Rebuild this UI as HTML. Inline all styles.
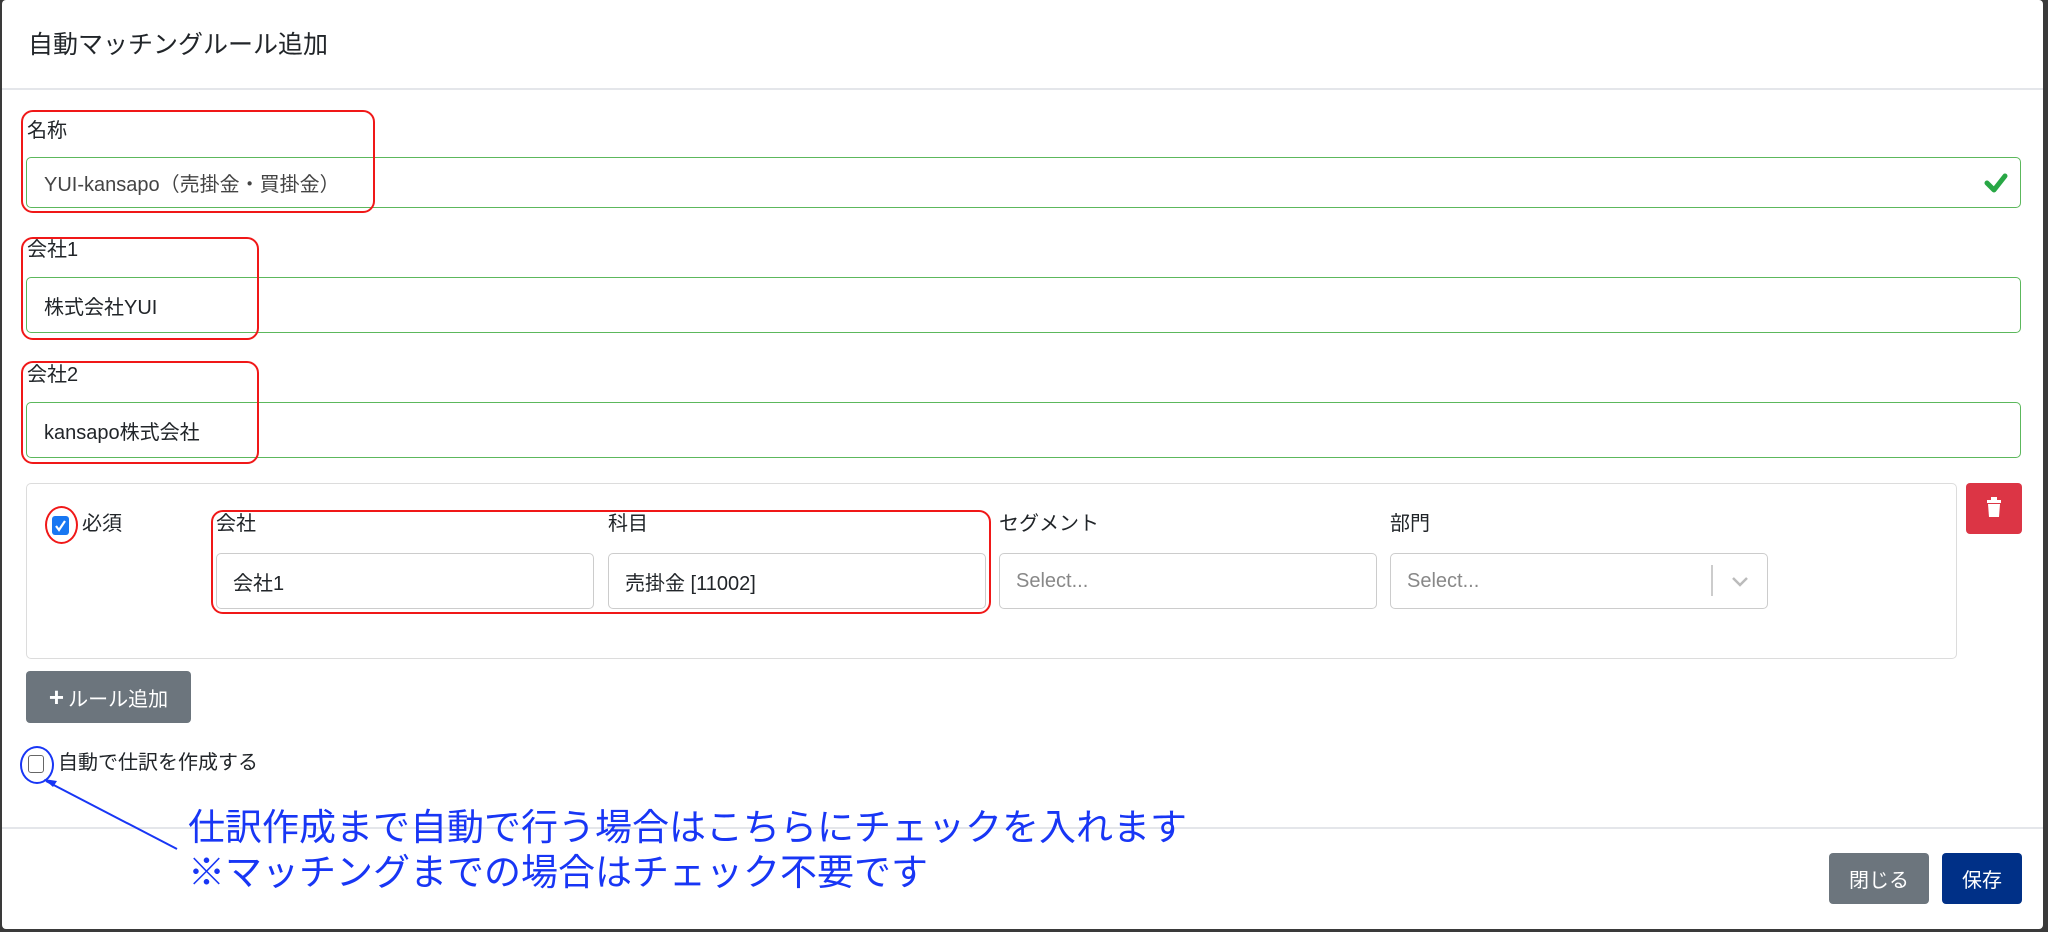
<!DOCTYPE html>
<html><head><meta charset="utf-8"><style>
*{box-sizing:border-box;margin:0;padding:0}
body{width:2048px;height:932px;overflow:hidden;background:#3a3a3a;font-family:"Liberation Sans","Noto Sans CJK JP",sans-serif;color:#212529;position:relative}
.modal{position:absolute;left:2px;top:0;width:2041px;height:929px;background:#fff;border-radius:4px}
.a{position:absolute}
.lbl{font-size:20px;line-height:24px}
.inp{position:absolute;border:1.5px solid #5cb85c;border-radius:5px;font-size:20px;padding-left:17px;display:flex;align-items:center}
.sel{position:absolute;border:1.5px solid #ccc;border-radius:5px;font-size:20px;padding-left:16px;display:flex;align-items:center;top:553px;height:56px;width:378px}
.red{position:absolute;border:2px solid #f01818;border-radius:12px}
.blue{color:#1836f5;font-size:37px;line-height:44px;white-space:nowrap}
</style></head><body>
<div class="modal"></div>
<div class="a" style="left:28px;top:30px;font-size:25px;line-height:30px">自動マッチングルール追加</div>
<div class="a" style="left:2px;top:88px;width:2041px;height:2px;background:#e4e6ea"></div>

<div class="a lbl" style="left:27px;top:119px">名称</div>
<div class="inp" style="left:26px;top:157px;width:1995px;height:51px;color:#444">YUI-kansapo（売掛金・買掛金）</div>
<svg class="a" style="left:1984px;top:172px" width="24" height="22" viewBox="0 0 24 22"><path d="M3 11l7 7L21 4" stroke="#28a745" stroke-width="5" fill="none" stroke-linecap="round" stroke-linejoin="round"/></svg>
<div class="red" style="left:21px;top:110px;width:354px;height:103px"></div>

<div class="a lbl" style="left:27px;top:238px">会社1</div>
<div class="inp" style="left:26px;top:277px;width:1995px;height:56px">株式会社YUI</div>
<div class="red" style="left:21px;top:237px;width:238px;height:103px"></div>

<div class="a lbl" style="left:27px;top:363px">会社2</div>
<div class="inp" style="left:26px;top:402px;width:1995px;height:56px">kansapo株式会社</div>
<div class="red" style="left:21px;top:361px;width:238px;height:103px"></div>

<div class="a" style="left:26px;top:483px;width:1931px;height:176px;border:1.5px solid #dcdcdc;border-radius:5px"></div>
<div class="a" style="left:52px;top:516px;width:17px;height:19px;background:#1877f2;border-radius:3px"></div>
<svg class="a" style="left:53px;top:518px" width="15" height="15"><path d="M3 8l3 4 6-9" stroke="#fff" stroke-width="2.2" fill="none"/></svg>
<div class="red" style="left:45px;top:506px;width:33px;height:38px;border-radius:50%"></div>
<div class="a lbl" style="left:82px;top:512px">必須</div>
<div class="a lbl" style="left:216px;top:512px">会社</div>
<div class="a lbl" style="left:608px;top:512px">科目</div>
<div class="a lbl" style="left:999px;top:512px">セグメント</div>
<div class="a lbl" style="left:1390px;top:512px">部門</div>
<div class="sel" style="left:216px">会社1</div>
<div class="sel" style="left:608px">売掛金 [11002]</div>
<div class="sel" style="left:999px;color:#888">Select...</div>
<div class="sel" style="left:1390px;color:#888">Select...</div>
<div class="a" style="left:1711px;top:565px;width:1.5px;height:31px;background:#ccc"></div>
<svg class="a" style="left:1730px;top:576px" width="20" height="12"><path d="M3 2l7 7 7-7" stroke="#bbb" stroke-width="2.5" fill="none"/></svg>
<div class="red" style="left:211px;top:510px;width:780px;height:104px"></div>
<div class="a" style="left:1966px;top:483px;width:56px;height:51px;background:#dc3545;border-radius:4px"></div>
<svg class="a" style="left:1984px;top:497px" width="20" height="24" viewBox="0 0 20 24"><rect x="3" y="3" width="14" height="3" fill="#fff"/><rect x="7" y="0" width="6" height="4" fill="#fff"/><path d="M4 7h12l-1 13H5z" fill="#fff"/></svg>

<div class="a" style="left:26px;top:671px;width:165px;height:52px;background:#6c757d;border-radius:4px;color:#fff;font-size:20px;display:flex;align-items:center;justify-content:center"><b style="font-size:26px;margin-right:4px">+</b>ルール追加</div>

<div class="a" style="left:28px;top:755px;width:16px;height:18px;border:1.5px solid #666;border-radius:3px"></div>
<div class="a" style="left:20px;top:746px;width:34px;height:38px;border:2px solid #1836f5;border-radius:50%"></div>
<div class="a lbl" style="left:58px;top:751px">自動で仕訳を作成する</div>

<div class="a" style="left:2px;top:827px;width:2041px;height:1.5px;background:#e4e6ea"></div>
<svg class="a" style="left:0;top:0" width="2048" height="932"><path d="M177 849L46 781" stroke="#1836f5" stroke-width="2"/><path d="M44 779l13 2-4 6z" fill="#1836f5"/></svg>
<div class="a blue" style="left:188px;top:806px">仕訳作成まで自動で行う場合はこちらにチェックを入れます</div>
<div class="a blue" style="left:188px;top:851px">※マッチングまでの場合はチェック不要です</div>

<div class="a" style="left:1829px;top:853px;width:100px;height:51px;background:#6c757d;border-radius:4px;color:#fff;font-size:20px;display:flex;align-items:center;justify-content:center">閉じる</div>
<div class="a" style="left:1942px;top:853px;width:80px;height:51px;background:#003087;border-radius:4px;color:#fff;font-size:20px;display:flex;align-items:center;justify-content:center">保存</div>
</body></html>
